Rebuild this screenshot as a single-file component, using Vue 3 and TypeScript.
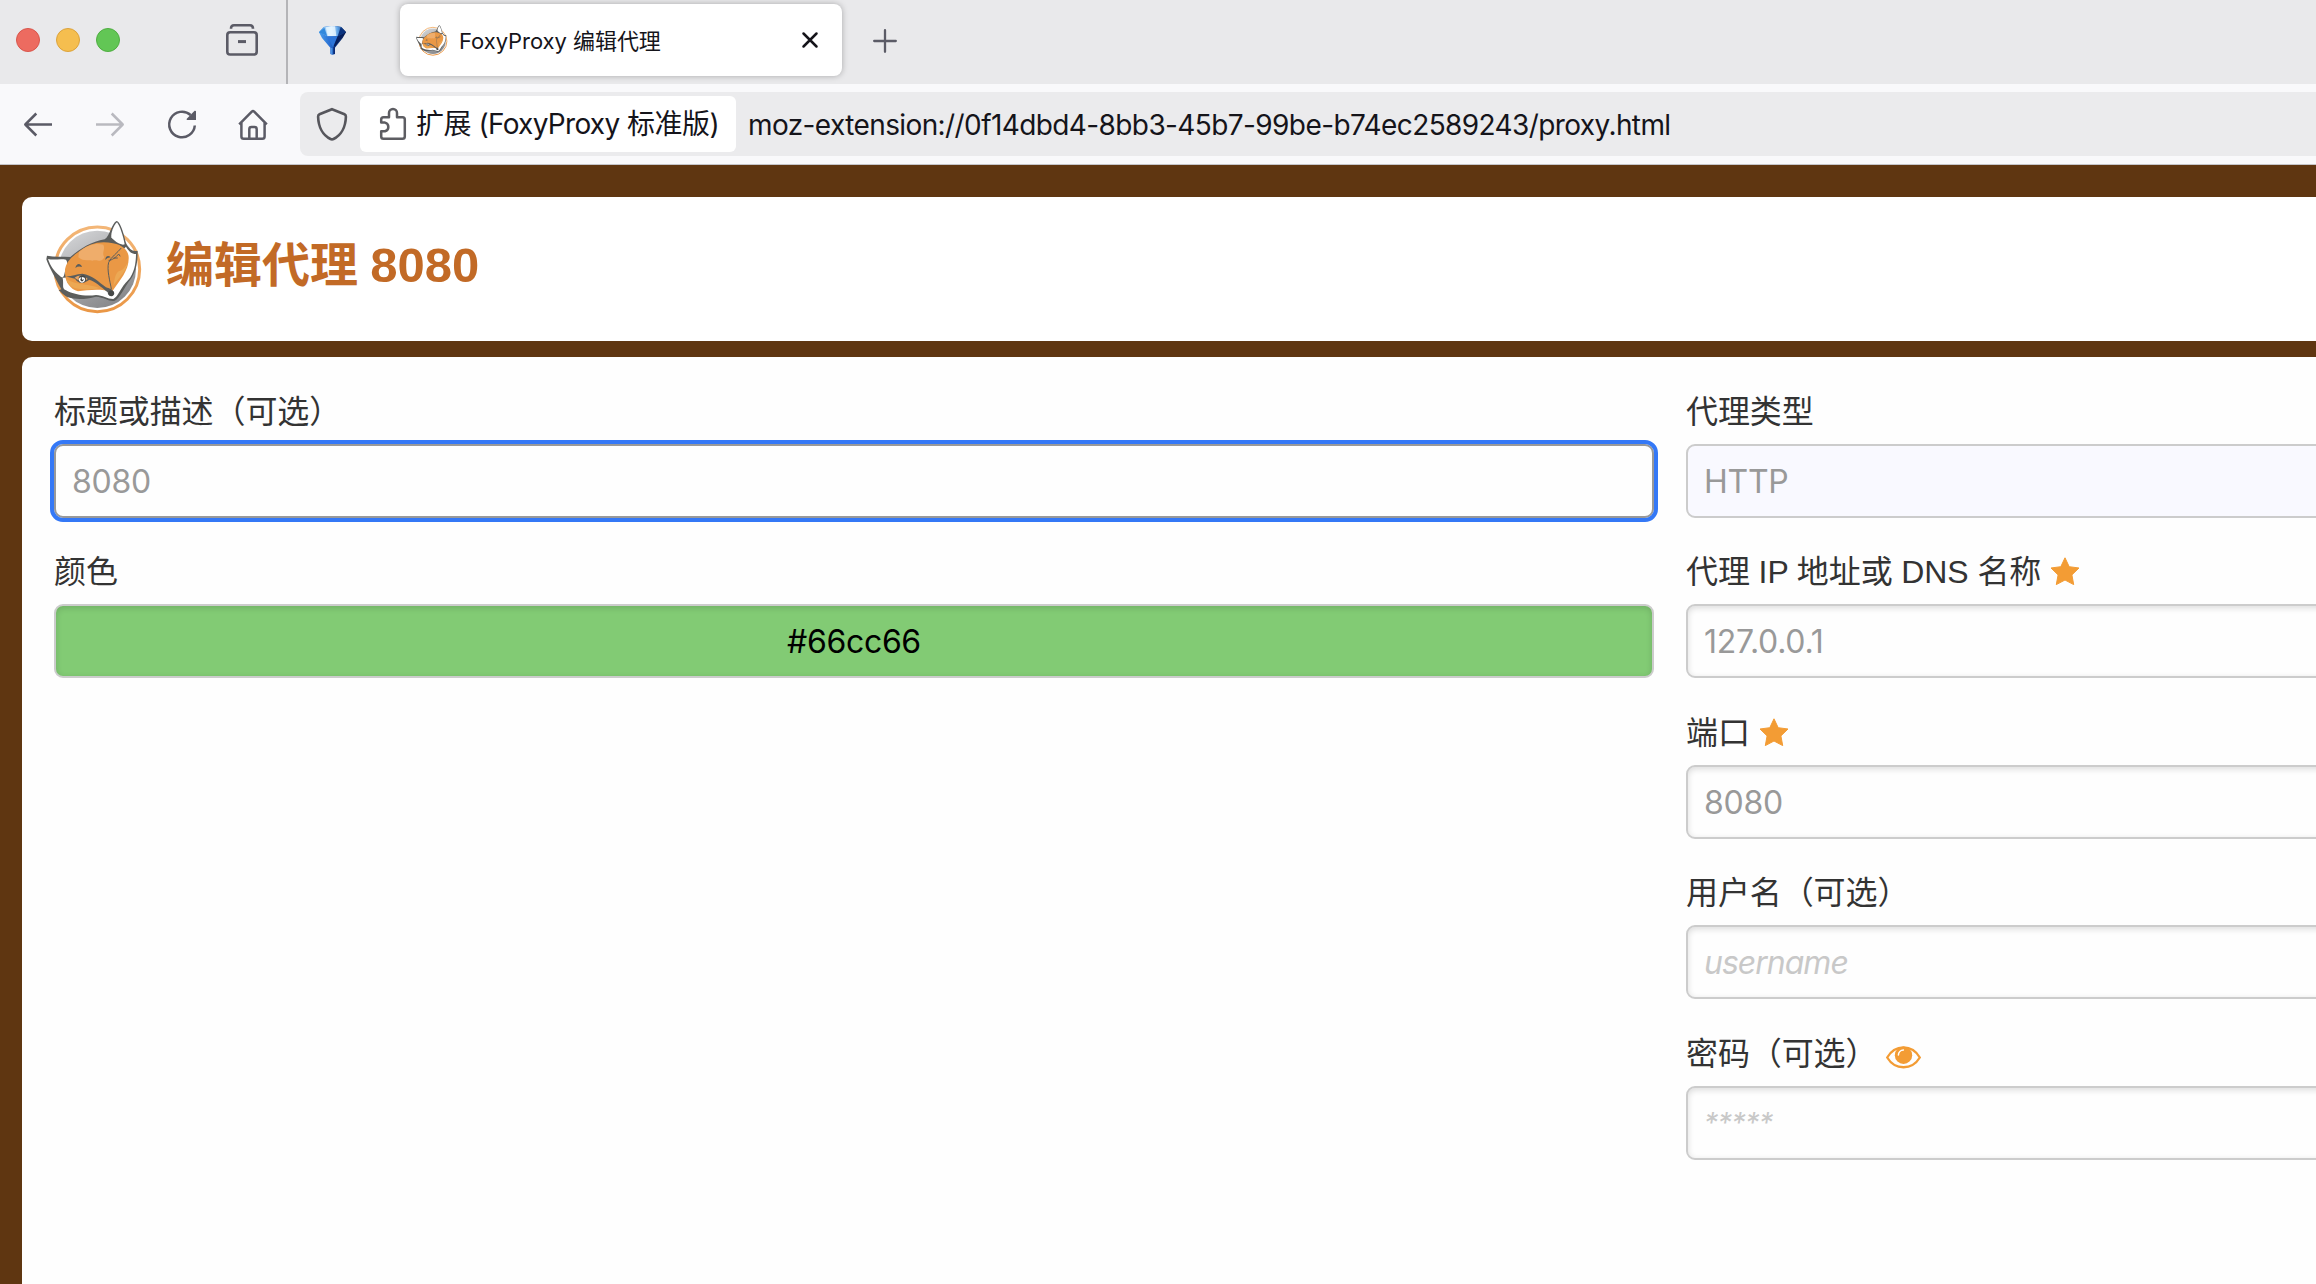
<script setup lang="ts">
import { defineComponent, h } from 'vue'

interface Field {
  label: string
  text: string
  kind: 'select' | 'value' | 'hint' | 'secret'
  mark?: 'star' | 'eye'
}

const fields: Field[] = [
  { label: '代理类型', text: 'HTTP', kind: 'select' },
  { label: '代理 IP 地址或 DNS 名称', text: '127.0.0.1', kind: 'value', mark: 'star' },
  { label: '端口', text: '8080', kind: 'value', mark: 'star' },
  { label: '用户名（可选）', text: 'username', kind: 'hint' },
  { label: '密码（可选）', text: '*****', kind: 'secret', mark: 'eye' },
]

const p = (d: string, fill: string, stroke?: string, width = 0) =>
  h('path', { d, fill, stroke, 'stroke-width': width, 'stroke-linecap': 'round', 'stroke-linejoin': 'round' })

const FoxLogo = defineComponent({
  setup() {
    return () =>
      h('svg', { viewBox: '30 30 291 282' }, [
        h('defs', [
          h('linearGradient', { id: 'disc', x1: '0.2', y1: '0', x2: '0.75', y2: '1' }, [
            h('stop', { offset: '0', 'stop-color': '#d3d4d6' }),
            h('stop', { offset: '0.5', 'stop-color': '#a9aaad' }),
            h('stop', { offset: '1', 'stop-color': '#848588' }),
          ]),
          h('linearGradient', { id: 'ring', x1: '0', y1: '0', x2: '0', y2: '1' }, [
            h('stop', { offset: '0', 'stop-color': '#f3b677' }),
            h('stop', { offset: '1', 'stop-color': '#ea9746' }),
          ]),
        ]),
        h('circle', { cx: 184, cy: 178, r: 127, fill: '#fff', stroke: 'url(#ring)', 'stroke-width': 9 }),
        h('circle', { cx: 184, cy: 178, r: 116, fill: 'url(#disc)' }),
        // dark silhouette
        p('M33 137 C55 141 80 139 103 141 C130 118 166 94 206 88 C222 78 226 42 241 33 C253 33 264 73 270 99 C278 118 290 125 305 122 C305 160 300 184 285 206 C264 232 252 265 236 272 C220 276 206 262 180 260 C150 268 122 270 96 262 C82 256 76 246 68 241 L76 238 C60 209 36 165 31 148 Z', '#5b5d5c'),
        // ears
        p('M36 147 C54 151 74 145 90 149 C99 160 88 175 85 193 C82 205 78 204 71 197 C55 185 42 166 36 147 Z', '#fff'),
        p('M243 37 C252 49 261 76 266 103 C254 108 233 92 226 82 C224 69 233 46 243 37 Z', '#fff'),
        // cheeks and chin
        p('M80 203 C84 225 76 235 90 241 C112 254 150 260 180 255 C200 255 214 267 232 267 C246 261 254 232 276 211 C295 191 300 158 300 132 C287 132 278 124 270 110 L180 200 Z', '#fff'),
        // face
        p('M88 197 C82 168 99 145 126 127 C158 99 195 91 231 100 C261 105 277 122 278 141 C280 181 252 210 229 244 C189 235 154 240 126 244 C103 237 89 216 88 197 Z', '#ea9845'),
        p('M129 126 C153 105 180 98 202 104 C209 119 196 128 205 142 C193 162 187 146 169 152 C155 148 143 156 127 142 Z', '#efad6b'),
        p('M91 207 C119 226 161 222 190 234 C163 241 124 239 111 232 C98 225 94 217 91 207 Z M276 157 C272 184 249 202 232 228 C236 207 238 191 248 184 C262 182 268 169 276 157 Z', '#eca854'),
        // left eye and muzzle line
        p('M87 199 C105 201 119 192 139 191 C169 195 188 216 210 232 C220 236 228 236 233 247 C228 260 216 261 215 247 C194 229 175 213 160 209 C144 222 126 222 117 206 Z', '#5b5d5c'),
        p('M116 203 C129 194 143 194 155 207 C144 216 126 213 116 203 Z', '#e9a462'),
        h('circle', { cx: 139, cy: 207, r: 11, fill: '#454746' }),
        p('M133 204 A7 7 0 1 0 143 204 M139 203 L140 207', 'none', '#fff', 4),
        // right eye
        p('M255 115 C244 129 226 140 218 157 C212 180 222 213 226 237', 'none', '#5b5d5c', 3),
        p('M219 151 C228 151 240 142 248 132 L252 138 M234 144 L244 144', 'none', '#5b5d5c', 3),
        // brows
        p('M118 174 C121 160 133 158 138 171 Q127 167 118 174 Z M208 150 C208 138 217 134 224 142 Q213 142 208 150 Z', '#5b5d5c'),
        h('circle', { cx: 226, cy: 250, r: 8.5, fill: '#464847' }),
      ])
  },
})
</script>

<template>
  <div class="window">
    <header class="tabs">
      <div class="lights"><i class="red" /><i class="amber" /><i class="green" /></div>
      <svg class="archive" viewBox="0 0 32 32" fill="none" stroke="#5b5b66" stroke-width="2.6">
        <path d="M5 4.8 C5 2.4 6 1.3 8 1.3 H24 C26 1.3 27 2.4 27 4.8" />
        <rect x="1.3" y="8.3" width="29.4" height="22.2" rx="2.8" />
        <path d="M12 17.6 H20" stroke-width="3" />
      </svg>
      <div class="divider" />
      <svg class="gem" viewBox="0 0 81 87">
        <defs>
          <linearGradient id="gemTop" x1="0" x2="1"><stop offset="0" stop-color="#3f95e4" /><stop offset=".45" stop-color="#e9f6ff" /><stop offset=".7" stop-color="#5aa0e6" /><stop offset="1" stop-color="#071c56" /></linearGradient>
          <linearGradient id="gemLow" x1="0" x2="1"><stop offset="0" stop-color="#4aa0ee" /><stop offset=".45" stop-color="#2568ce" /><stop offset="1" stop-color="#02103f" /></linearGradient>
        </defs>
        <path d="M0 19 L14 3 Q40 -3 67 3 L81 19 L71 36 L48 65 V84 Q41 89 34 84 V65 L9 36 Z" fill="url(#gemLow)" />
        <path d="M0 19 L14 3 Q40 -3 67 3 L81 19 L56 31 L25 31 Z" fill="url(#gemTop)" />
        <path d="M0 19 L16 5 L25 31 Z" fill="#3289dd" />
        <path d="M20 4 L48 1 L52 30 L27 31 Z" fill="#e4f4ff" opacity=".85" />
        <path d="M65 4 L81 19 L56 31 Z" fill="#0b337f" />
        <path d="M25 31 H56 L42 64 Z" fill="#2d75d8" />
        <path d="M56 31 L77 22 L48 63 L44 60 Z" fill="#071f5c" />
        <path d="M35 66 H40 V84 H35 Z" fill="#4e93e2" />
        <path d="M43 62 H48 V84 H43 Z" fill="#0b2a74" />
      </svg>
      <div class="tab">
        <FoxLogo class="favicon" />
        <span class="tab-title">FoxyProxy 编辑代理</span>
        <svg class="close" viewBox="0 0 16 16" fill="none" stroke="#15141a" stroke-width="2.5" stroke-linecap="round"><path d="M1.5 1.5 L14.5 14.5 M14.5 1.5 L1.5 14.5" /></svg>
      </div>
      <svg class="plus" viewBox="0 0 24 24" fill="none" stroke="#5b5b66" stroke-width="2.3" stroke-linecap="round"><path d="M12 1.2 V22.8 M1.2 12 H22.8" /></svg>
    </header>

    <nav class="toolbar">
      <svg class="nav back" viewBox="0 0 32 32"><path d="M30 16.5 H3.5 M14.3 5.5 L3.3 16.5 L14.3 27.5" /></svg>
      <svg class="nav forward" viewBox="0 0 32 32"><path d="M2 16.5 H28.5 M17.7 5.5 L28.7 16.5 L17.7 27.5" /></svg>
      <svg class="nav reload" viewBox="0 0 32 32"><path d="M24.6 7 A12.8 12.8 0 1 0 28.8 17.5" /><path class="solid" d="M30 3.3 V12 H21.2 Q20 11.6 20.8 10.7 L28.6 2.8 Q29.6 2.3 30 3.3 Z" /></svg>
      <svg class="nav home" viewBox="0 0 32 32"><path d="M2.2 16.3 L14.8 3.6 Q16 2.6 17.2 3.6 L29.8 16.3 M4.4 14.5 V28.4 Q4.4 30.7 6.7 30.7 H25.3 Q27.6 30.7 27.6 28.4 V14.5 M12.3 30.7 V21.2 Q12.3 19 14.5 19 H17.5 Q19.7 19 19.7 21.2 V30.7" /></svg>
      <div class="address">
        <svg class="shield" viewBox="0 0 32 34"><path d="M16 2.2 L28.5 7.2 Q30 7.9 29.9 9.6 C29.6 20 25 28.5 17.5 32 Q16 32.7 14.5 32 C7 28.5 2.4 20 2.1 9.6 Q2 7.9 3.5 7.2 Z" /></svg>
        <div class="identity">
          <svg class="puzzle" viewBox="0 0 26 32"><path d="M3.5 9.2 H9 V5 A4 4 0 0 1 17 5 V9.2 H22.5 Q24.8 9.2 24.8 11.5 V28.5 Q24.8 30.8 22.5 30.8 H3.5 Q1.2 30.8 1.2 28.5 V23.3 H5 A4.5 4.5 0 0 0 5 14.6 H1.2 V11.5 Q1.2 9.2 3.5 9.2 Z" /></svg>
          <span class="identity-text">扩展 <span class="latin">(FoxyProxy</span> 标准版)</span>
        </div>
        <span class="url">moz-extension://0f14dbd4-8bb3-45b7-99be-b74ec2589243/proxy.html</span>
      </div>
    </nav>

    <main class="page">
      <section class="card title-card">
        <FoxLogo class="logo" />
        <h1>编辑代理 <span class="port">8080</span></h1>
      </section>
      <section class="card form">
        <div class="column left">
          <label>标题或描述（可选）</label>
          <div class="input value focused"><span>8080</span></div>
          <label>颜色</label>
          <div class="input color"><span>#66cc66</span></div>
        </div>
        <div class="column right">
          <template v-for="f in fields" :key="f.label">
            <label>
              <span>{{ f.label }}</span>
              <svg v-if="f.mark === 'star'" class="star" viewBox="0 0 30 29"><path d="M15 .8 L19.2 9.7 L29 11 L21.9 17.9 L23.7 27.6 L15 23 L6.3 27.6 L8.1 17.9 L1 11 L10.8 9.7 Z" /></svg>
              <svg v-if="f.mark === 'eye'" class="eye" viewBox="0 0 35 23"><path d="M1.2 11.5 C9 -2 26 -2 33.8 11.5 C26 24.5 9 24.5 1.2 11.5 Z" fill="none" stroke="#f39c34" stroke-width="2.3" /><circle cx="17.5" cy="9.2" r="8.7" fill="#f39c34" /><path d="M12.4 9 A5.2 5.2 0 0 1 17.4 4" fill="none" stroke="#fff" stroke-width="1.5" stroke-linecap="round" /></svg>
            </label>
            <div class="input" :class="f.kind"><span>{{ f.text }}</span></div>
          </template>
        </div>
      </section>
    </main>
  </div>
</template>

<style>
body { overflow: hidden; }
</style>

<style scoped>
* { box-sizing: border-box; }
svg { display: block; flex: none; overflow: visible; }

.window {
  width: 2316px;
  height: 1284px;
  display: flex;
  flex-direction: column;
  overflow: hidden;
  white-space: nowrap;
  font-family: Inter, "Noto Sans CJK SC", sans-serif;
  background: #5f3611;
}

.tabs { height: 84px; flex: none; display: flex; background: #e9e9eb; }
.lights { display: flex; gap: 16px; margin: 28px 106px 0 16px; }
.lights i { width: 24px; height: 24px; border-radius: 50%; border-width: 1px; border-style: solid; }
.red { background: #ed6b60; border-color: #d9564c; }
.amber { background: #f5be4f; border-color: #dca33c; }
.green { background: #62c655; border-color: #4fae41; }
.archive { width: 32px; height: 32px; margin: 24px 28px 0 0; }
.divider { width: 2px; height: 84px; background: #b4b4b7; }
.gem { width: 27px; height: 29px; margin: 26px 54px 0 31px; }
.tab {
  width: 442px;
  height: 72px;
  margin-top: 4px;
  padding: 0 24px 0 16px;
  display: flex;
  align-items: center;
  border-radius: 8px;
  background: #fff;
  box-shadow: 0 0 6px rgba(0, 0, 0, .28);
}
.favicon { width: 32px; height: 31px; }
.tab-title { flex: 1; margin-left: 11px; font-size: 22px; line-height: 32px; letter-spacing: -.05px; color: #15141a; position: relative; top: 1px; }
.close { width: 16px; height: 16px; }
.plus { width: 24px; height: 24px; margin: 29px 0 0 31px; }

.toolbar {
  height: 81px;
  flex: none;
  display: flex;
  background: #f9f9fb;
  border-bottom: 1px solid #c5c5c9;
}
.nav { width: 32px; height: 32px; margin: 24px 40px 0 0; fill: none; stroke: #5b5b66; stroke-width: 2.5; stroke-linejoin: round; }
.nav .solid { fill: #5b5b66; stroke: none; }
.back { margin-left: 22px; }
.forward { opacity: .4; }
.reload { margin-right: 39px; }
.home { margin-right: 31px; }
.address { flex: 1; height: 64px; margin-top: 8px; display: flex; align-items: center; border-radius: 8px 0 0 8px; background: #ebebed; }
.shield { width: 32px; height: 34px; margin: -1px 12px 0 16px; fill: none; stroke: #56565c; stroke-width: 2.6; }
.identity { width: 376px; height: 56px; padding-left: 20px; display: flex; align-items: center; border-radius: 6px; background: #fff; }
.puzzle { width: 26px; height: 32px; fill: none; stroke: #5d5d62; stroke-width: 2.5; stroke-linejoin: round; }
.identity-text { margin: -4px 0 0 10px; font-size: 28px; letter-spacing: -.5px; color: #15141a; }
.latin { letter-spacing: -.7px; }
.url { margin: 2px 0 0 12px; font-size: 28px; letter-spacing: -.6px; color: #15141a; }

.page { flex: 1; min-height: 0; padding: 32px 0 0 22px; display: flex; flex-direction: column; gap: 16px; }
.card { background: #fff; border-radius: 10px 0 0 10px; }
.title-card { height: 144px; flex: none; display: flex; padding-left: 24px; }
.logo { width: 97px; height: 94px; margin-top: 23px; }
h1 {
  margin: 33px 0 0 23px;
  font: bold 48px/72px "Liberation Sans", "Noto Sans CJK SC", sans-serif;
  color: #c26a26;
}
.port { margin-left: -1px; font-size: 49px; line-height: 1; }

.form { flex: 1; display: flex; gap: 32px; padding: 31px 0 0 32px; background: #fefefe; border-bottom-left-radius: 0; }
.column { flex: none; display: flex; flex-direction: column; }
.left { width: 1600px; }
.right { width: 900px; }
label {
  height: 56px;
  flex: none;
  padding-top: 1px;
  display: flex;
  align-items: flex-start;
  font: 32px/46px "Liberation Sans", "Noto Sans CJK SC", sans-serif;
  letter-spacing: -.1px;
  color: #333;
}
.input {
  height: 74px;
  flex: none;
  margin-bottom: 30.4px;
  padding-left: 16px;
  border: 2px solid #ccc;
  border-radius: 9px;
  background: #fefefe;
  box-shadow: inset 0 2px 6px rgba(0, 0, 0, .14);
  font-size: 32px;
  line-height: 71px;
  letter-spacing: -.25px;
  color: #999;
}
.focused { border-color: #999; box-shadow: none; outline: 4px solid #3478f6; }
.color { padding: 0; text-align: center; color: #000; background: #82cb74; letter-spacing: -.35px; }
.select { background: #f9f9ff; box-shadow: none; }
.hint { font-style: italic; letter-spacing: -1px; color: #c8c8c8; }
.secret { font-size: 28px; font-style: italic; color: #c8c8c8; }
.star { width: 30px; height: 29px; margin: 8px 0 0 9px; fill: #f39c34; stroke: #f39c34; stroke-width: 1; stroke-linejoin: round; }
.eye { width: 35px; height: 23px; margin: 15px 0 0 9px; }
</style>
